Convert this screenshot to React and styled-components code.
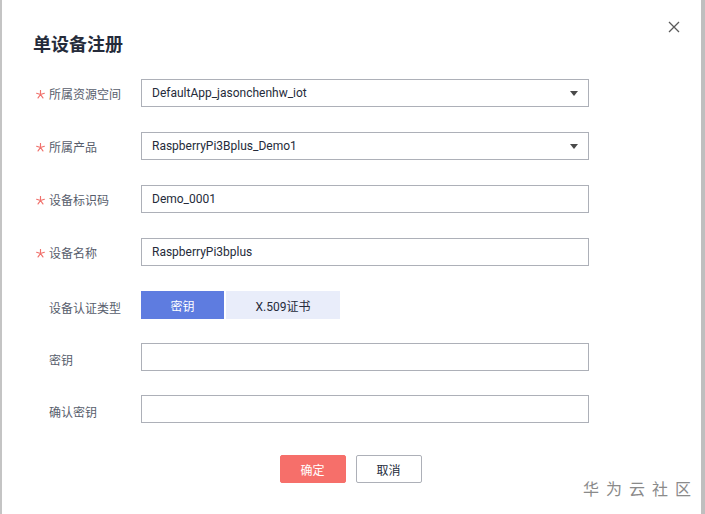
import React from "react";
import styled, { createGlobalStyle } from "styled-components";

const Global = createGlobalStyle`
  html, body {
    margin: 0;
    padding: 0;
    background: #ffffff;
  }
  body {
    font-family: "Noto Sans CJK SC", "Roboto", "Liberation Sans", sans-serif;
  }
`;

const Dialog = styled.div`
  position: relative;
  box-sizing: border-box;
  width: 705px;
  height: 514px;
  background: #fff;
  border-left: 2px solid #c4c4c4;
  border-right: 4px solid #bfbfbf;
  padding: 30px 0 0 0;
  overflow: hidden;
`;

const Header = styled.div`
  display: flex;
  justify-content: space-between;
  align-items: flex-start;
  padding: 0 20px 0 31px;
`;

const Title = styled.h2`
  margin: 0;
  font-size: 18px;
  line-height: 26px;
  font-weight: 700;
  color: #252b3a;
`;

const Close = styled.button`
  border: none;
  background: none;
  padding: 0;
  margin-top: -10px;
  width: 14px;
  height: 14px;
  cursor: pointer;
  display: flex;
`;

const Form = styled.div`
  display: flex;
  flex-direction: column;
  gap: 25px;
  margin-top: 23px;
  padding-left: 34px;
`;

const Row = styled.div`
  display: flex;
  align-items: center;
  height: 28px;
  margin-top: ${(p) => (p.$tight ? "-1px" : "0")};
`;

const Label = styled.div`
  width: 105px;
  display: flex;
  align-items: center;
  font-size: 12px;
  color: #575d6c;
  padding-top: ${(p) => p.$low || 0}px;
`;

const Star = styled.span`
  width: 13px;
  height: 9px;
  display: flex;
  align-items: center;
  margin-top: 2px;
  visibility: ${(p) => (p.$show ? "visible" : "hidden")};
`;

const Field = styled.div`
  box-sizing: border-box;
  width: 448px;
  height: 28px;
  border: 1px solid #adb0b8;
  display: flex;
  align-items: center;
  justify-content: space-between;
  padding: 0 10px 0 10px;
  font-family: "Roboto", "Noto Sans CJK SC", sans-serif;
  font-size: 12px;
  color: #252b3a;
`;

const Caret = styled.span`
  width: 0;
  height: 0;
  border-left: 4px solid transparent;
  border-right: 4px solid transparent;
  border-top: 5px solid #4a4a4a;
`;

const Toggle = styled.div`
  display: flex;
  gap: 2px;
`;

const ToggleItem = styled.div`
  height: 28px;
  width: ${(p) => p.$w}px;
  display: flex;
  align-items: center;
  justify-content: center;
  font-size: 12px;
  font-family: "Roboto", "Noto Sans CJK SC", sans-serif;
  background: ${(p) => (p.$active ? "#5e7ce0" : "#e9edfa")};
  color: ${(p) => (p.$active ? "#ffffff" : "#252b3a")};
`;

const Actions = styled.div`
  display: flex;
  justify-content: center;
  gap: 10px;
  margin-top: 32px;
  padding-right: 2px;
`;

const Button = styled.button`
  box-sizing: border-box;
  width: 66px;
  height: 28px;
  font-size: 12px;
  font-family: "Noto Sans CJK SC", sans-serif;
  border-radius: 2px;
  cursor: pointer;
  background: ${(p) => (p.$primary ? "#f66f6a" : "#ffffff")};
  color: ${(p) => (p.$primary ? "#ffffff" : "#252b3a")};
  border: 1px solid ${(p) => (p.$primary ? "#f66f6a" : "#adb0b8")};
`;

const Watermark = styled.div`
  position: absolute;
  right: 3px;
  bottom: 14px;
  font-size: 16px;
  letter-spacing: 7px;
  color: #8a8a8a;
  font-family: "Noto Sans CJK SC", sans-serif;
`;

const rows = [
  { label: "所属资源空间", required: true, value: "DefaultApp_jasonchenhw_iot", select: true },
  { label: "所属产品", required: true, value: "RaspberryPi3Bplus_Demo1", select: true },
  { label: "设备标识码", required: true, value: "Demo_0001" },
  { label: "设备名称", required: true, value: "RaspberryPi3bplus" },
];

function RequiredMark({ show }) {
  return (
    <Star $show={show}>
      <svg width="9" height="9" viewBox="0 0 10 10">
        <path
          d="M5 5L5 0.5M5 5L9.3 3.6M5 5L7.7 8.8M5 5L2.3 8.8M5 5L0.7 3.6"
          stroke="#f0716c"
          strokeWidth="1.3"
          strokeLinecap="round"
          fill="none"
        />
      </svg>
    </Star>
  );
}

export default function App() {
  return (
    <Dialog>
      <Global />
      <Header>
        <Title>单设备注册</Title>
        <Close aria-label="close">
          <svg width="14" height="14" viewBox="0 0 14 14">
            <path d="M2 2L12 12M12 2L2 12" stroke="#5a5a5a" strokeWidth="1.3" fill="none" />
          </svg>
        </Close>
      </Header>
      <Form>
        {rows.map((r) => (
          <Row key={r.label}>
            <Label>
              <RequiredMark show={r.required} />
              {r.label}
            </Label>
            <Field>
              <span>{r.value}</span>
              {r.select && <Caret />}
            </Field>
          </Row>
        ))}
        <Row>
          <Label $low={4}>
            <RequiredMark />
            设备认证类型
          </Label>
          <Toggle>
            <ToggleItem $active $w={83}>密钥</ToggleItem>
            <ToggleItem $w={114}>X.509证书</ToggleItem>
          </Toggle>
        </Row>
        <Row $tight>
          <Label $low={4}>
            <RequiredMark />
            密钥
          </Label>
          <Field />
        </Row>
        <Row $tight>
          <Label $low={4}>
            <RequiredMark />
            确认密钥
          </Label>
          <Field />
        </Row>
      </Form>
      <Actions>
        <Button $primary>确定</Button>
        <Button>取消</Button>
      </Actions>
      <Watermark>华为云社区</Watermark>
    </Dialog>
  );
}
